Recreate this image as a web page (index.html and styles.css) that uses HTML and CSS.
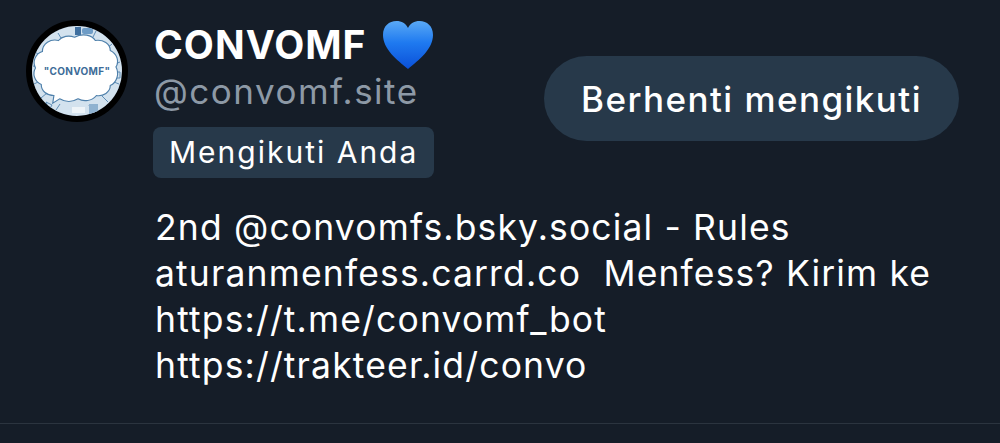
FILE: index.html
```html
<!DOCTYPE html>
<html lang="en">
<head>
    <meta charset="UTF-8">
    <meta name="viewport" content="width=device-width, initial-scale=1.0">
    <title>CONVOMF</title>
    <link rel="stylesheet" href="styles.css">
</head>
<body>
    <div class="profile">
        <div class="profile-top">
            <div class="avatar">
                <svg class="avatar-art" viewBox="0 0 90 90" width="90" height="90" aria-hidden="true">
                    <rect width="90" height="90" fill="#d3e2ee"/>
                    <g fill="none" stroke="#5f8db5" stroke-width="1">
                        <path d="M3 26l6 4M1 40l5 1M2 58l6-3M9 72l6-5M24 84l4-6M60 86l-3-7M76 76l-6-6M87 58l-5-2M88 36l-5 2M80 18l-6 5M64 5l-3 6M26 7l3 5"/>
                        <path d="M6 34h5v6H6zM82 46h6v6h-6zM14 76l6 3-3 5z"/>
                    </g>
                    <rect x="43" y="1" width="6" height="8" fill="#3f6f9f"/>
                    <rect x="50" y="2" width="11" height="6" rx="2" fill="#6e9cc6"/>
                    <rect x="40" y="81" width="13" height="6" fill="#eef4f8"/>
                    <rect x="57" y="78" width="9" height="10" fill="#8fb2d0"/>
                    <path transform="translate(-8 -2) scale(1.15 1.1)" d="M44 12c7-4 15-2 18 3 7-1 13 3 13 9 6 3 8 10 5 15 3 6 1 14-5 17 0 6-6 10-12 9-4 5-11 6-16 3-5 3-11 3-16 0l-6 4 1-7c-6 0-11-4-11-10-6-3-8-10-5-15-3-6 0-13 6-15 0-7 7-12 14-10 3-4 9-5 14-3z" fill="#ffffff" stroke="#4f80ab" stroke-width="1"/>
                    <text class="avatar-label" x="45" y="49" text-anchor="middle">"CONVOMF"</text>
                </svg>
            </div>
            <div class="identity">
                <div class="display-name">
                    <span>CONVOMF</span>
                    <svg class="heart" viewBox="0 0 50 48" width="50" height="48" aria-hidden="true">
                        <defs>
                            <linearGradient id="heartFill" x1="0" y1="0" x2="0" y2="1">
                                <stop offset="0" stop-color="#5aa9f5"/>
                                <stop offset="0.45" stop-color="#1f7af0"/>
                                <stop offset="1" stop-color="#0a50d8"/>
                            </linearGradient>
                        </defs>
                        <path d="M25 48C14 39 0 28 0 14 0 5 6 0 13.500 0 18.500 0 23 2.500 25 7 27 2.500 31.500 0 36.500 0 44 0 50 5 50 14 50 28 36 39 25 48z" fill="url(#heartFill)"/>
                    </svg>
                </div>
                <div class="handle">@convomf.site</div>
                <div class="follows-you">Mengikuti Anda</div>
            </div>
            <button class="unfollow-button">Berhenti mengikuti</button>
        </div>
        <div class="bio">
            <div>2nd @convomfs.bsky.social - Rules</div>
            <div>aturanmenfess.carrd.co&nbsp; Menfess? Kirim ke</div>
            <div>https://t.me/convomf_bot</div>
            <div>https://trakteer.id/convo</div>
        </div>
    </div>
    <div class="divider"></div>
</body>
</html>
```

FILE: styles.css
```css
html, body {
    height: 100%;
}
body {
    background-color: #151d28;
    color: #ffffff;
    font-family: "Inter", "Liberation Sans", sans-serif;
    margin: 0;
    padding: 0;
    overflow: hidden;
}
.profile {
    height: 423px;
    box-sizing: border-box;
    padding: 20px 41px 0 26px;
}
.profile-top {
    display: flex;
    align-items: flex-start;
}
.avatar {
    width: 90px;
    height: 90px;
    border: 6px solid #000000;
    border-radius: 50%;
    overflow: hidden;
    flex-shrink: 0;
}
.avatar-art {
    display: block;
}
.avatar-label {
    font-size: 10px;
    font-weight: 700;
    fill: #3d6c98;
    letter-spacing: 0.3px;
}
.identity {
    margin-left: 26px;
    flex-grow: 1;
}
.display-name {
    display: flex;
    align-items: center;
    gap: 17px;
    height: 49px;
    font-size: 39px;
    font-weight: 700;
    line-height: 49px;
    letter-spacing: 1px;
}
.heart {
    display: block;
}
.handle {
    color: #8d99a6;
    font-size: 35px;
    line-height: 44px;
    letter-spacing: 1.5px;
}
.follows-you {
    display: inline-block;
    margin-top: 14px;
    margin-left: -1px;
    padding: 0 16px;
    background-color: #27394a;
    border-radius: 8px;
    font-size: 30px;
    line-height: 51px;
    letter-spacing: 2px;
}
.unfollow-button {
    margin-top: 36px;
    height: 85px;
    width: 415px;
    background-color: #27394a;
    color: #ffffff;
    border: none;
    border-radius: 43px;
    font-family: inherit;
    font-size: 35px;
    font-weight: 500;
    letter-spacing: 1.45px;
    cursor: pointer;
}
.bio {
    margin-top: 27px;
    margin-left: 129px;
    font-size: 35.500px;
    line-height: 46px;
    letter-spacing: 1.15px;
}
.divider {
    height: 1px;
    background-color: #2b343f;
}
```
